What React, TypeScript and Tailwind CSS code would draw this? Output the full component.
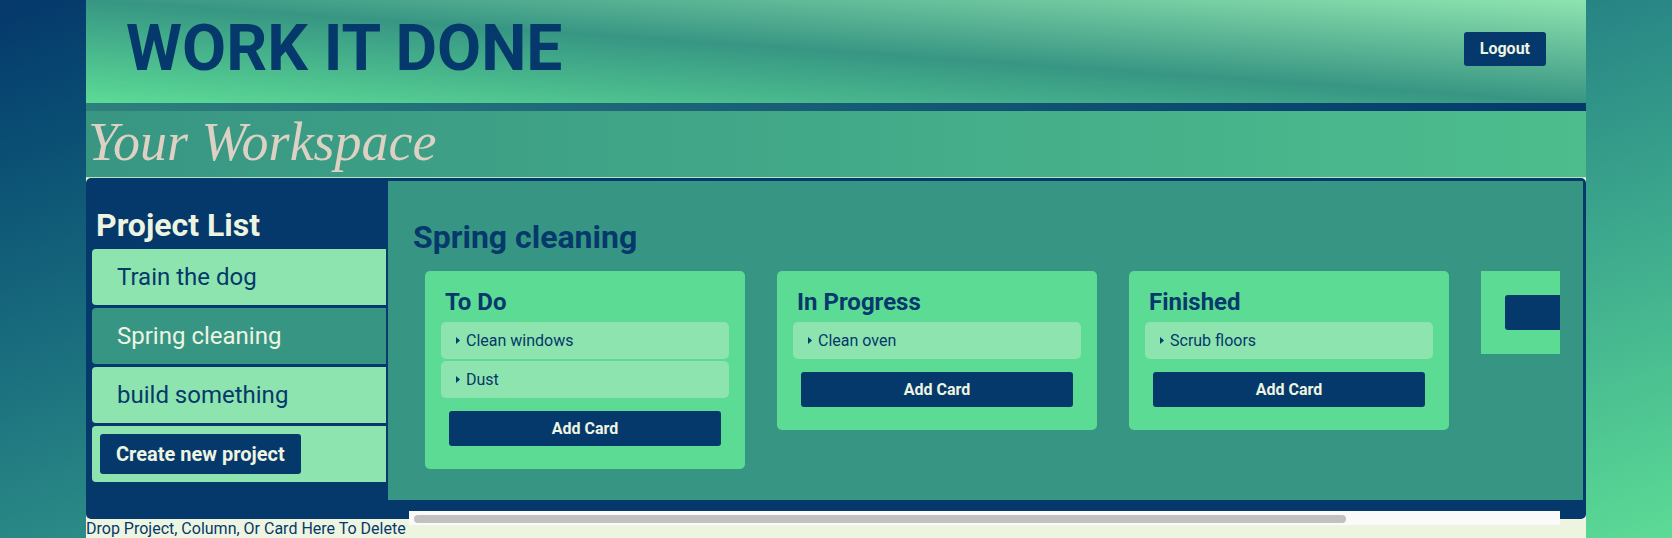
import { useState } from "react";

type Column = { title: string; cards: string[] };

const projects = ["Train the dog", "Spring cleaning", "build something"];

const columns: Column[] = [
  { title: "To Do", cards: ["Clean windows", "Dust"] },
  { title: "In Progress", cards: ["Clean oven"] },
  { title: "Finished", cards: ["Scrub floors"] },
];

const roboto = { fontFamily: "Roboto, 'Liberation Sans', sans-serif" };

function CardItem({ text }: { text: string }) {
  return (
    <div className="flex h-[37px] items-center rounded-[5px] bg-[#8ee4af] pl-[15px] text-[16px] text-[#05386b]">
      <svg width="4" height="7" viewBox="0 0 4 7" className="mr-[6px]">
        <path d="M0 0 L4 3.5 L0 7 Z" fill="#05386b" />
      </svg>
      <span>{text}</span>
    </div>
  );
}

function BoardColumn({ column }: { column: Column }) {
  return (
    <div className="w-[320px] shrink-0 rounded-[5px] bg-[#5cdb95] px-4 pt-[17px] pb-[23px]">
      <h3 className="pl-1 text-[24px] leading-[28px] font-bold text-[#05386b]">
        {column.title}
      </h3>
      <div className="mt-[6px] flex flex-col gap-[2px]">
        {column.cards.map((c) => (
          <CardItem key={c} text={c} />
        ))}
      </div>
      <button className="mx-2 mt-[13px] h-[35px] w-[272px] rounded-[3px] bg-[#05386b] text-[16px] font-bold text-[#edf5e1]">
        Add Card
      </button>
    </div>
  );
}

export default function App() {
  const [active, setActive] = useState(1);

  return (
    <div
      className="min-h-screen w-full bg-gradient-to-br from-[#05386b] to-[#5cdb95]"
      style={roboto}
    >
      <div className="mx-auto w-[1500px] bg-[#edf5e1]">
        {/* header */}
        <header className="flex h-[103px] items-start justify-between bg-gradient-to-tr from-[#5cdb95] via-[#379683] to-[#8ee4af] pt-[11px] pr-10 pl-10">
          <h1 className="text-[64px] leading-[75px] font-bold text-[#05386b]">
            WORK IT DONE
          </h1>
          <button className="mt-[21px] h-[34px] rounded-[3px] bg-[#05386b] px-4 text-[16px] font-bold text-[#edf5e1]">
            Logout
          </button>
        </header>
        <div className="h-[8px] bg-gradient-to-r from-[#2e807d] to-[#05386b]" />

        <div className="h-[67px] border-b border-[#b5e3c4] bg-gradient-to-r from-[#389683] to-[#4dbd8d] pt-[1px] pl-[2px]">
          <h2
            className="text-[54px] leading-[60px] italic text-[#ddd1c3]"
            style={{ fontFamily: "'Liberation Serif', serif" }}
          >
            Your Workspace
          </h2>
        </div>

        {/* workspace */}
        <div className="flex rounded-[5px] bg-[#05386b]">
          <aside className="w-[300px] shrink-0 pt-[28px]">
            <h2 className="pl-[10px] text-[32px] leading-[38px] font-bold text-[#edf5e1]">
              Project List
            </h2>
            <div className="mt-[5px] ml-[6px] flex flex-col gap-[3px]">
              {projects.map((p, i) => (
                <div
                  key={p}
                  onClick={() => setActive(i)}
                  className={
                    i === active
                      ? "flex h-[56px] cursor-pointer items-center rounded-l-[4px] bg-[#379683] pl-[25px] text-[24px] text-[#edf5e1]"
                      : "flex h-[56px] cursor-pointer items-center rounded-l-[4px] bg-[#8ee4af] pl-[25px] text-[24px] text-[#05386b]"
                  }
                >
                  {p}
                </div>
              ))}
              <div className="flex h-[56px] items-center rounded-l-[4px] bg-[#8ee4af] pl-[8px]">
                <button className="h-[40px] rounded-[3px] bg-[#05386b] px-4 text-[20px] font-bold text-[#edf5e1]">
                  Create new project
                </button>
              </div>
            </div>
          </aside>

          <main className="mt-[3px] mr-[3px] mb-[19px] ml-[2px] h-[319px] min-w-0 flex-1 bg-[#379683] pt-[37px] pr-[23px] pl-[21px]">
            <h2 className="pl-1 text-[32px] leading-[38px] font-bold text-[#05386b]">
              {projects[active]}
            </h2>
            <div className="mt-[15px] h-[240px] overflow-hidden">
              <div className="flex items-start gap-8 pl-4">
                {columns.map((col) => (
                  <BoardColumn key={col.title} column={col} />
                ))}
                <div className="w-[320px] shrink-0 bg-[#5cdb95] p-6">
                  <button
                    aria-label="Add Column"
                    className="block h-[35px] w-[272px] rounded-[3px] bg-[#05386b]"
                  />
                </div>
              </div>
            </div>
            {/* horizontal scrollbar */}
            <div className="h-[14px] bg-[#fafafa] py-[4px] pl-[5px]">
              <div className="h-[8px] w-[932px] rounded-full bg-[#c1c1c1]" />
            </div>
          </main>
        </div>

        <p className="text-[16px] leading-[19px] text-[#05386b]">
          Drop Project, Column, Or Card Here To Delete
        </p>
      </div>
    </div>
  );
}
